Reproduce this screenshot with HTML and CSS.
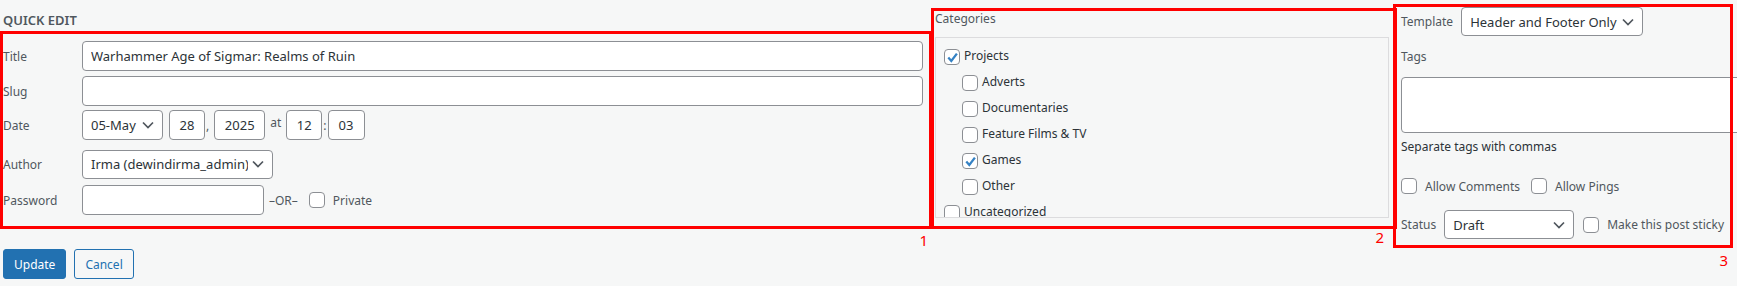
FILE: index.html
```html
<!DOCTYPE html>
<html>
<head>
<link rel="stylesheet" href="styles.css">
</head>
<body>

<div class="quick-edit">
  <div class="cols">

    <!-- left column: title, slug, date, author, password -->
    <div class="col col-left">
      <h4 class="legend">QUICK EDIT</h4>
      <div class="row row-title">
        <span class="lbl">Title</span>
        <input class="txt wide" type="text" value="Warhammer Age of Sigmar: Realms of Ruin">
      </div>
      <div class="row row-slug">
        <span class="lbl">Slug</span>
        <input class="txt wide" type="text" value="">
      </div>
      <div class="row row-date">
        <span class="lbl">Date</span>
        <select class="sel sel-month"><option>05-May</option></select>
        <input class="txt num n-day" type="text" value="28"><span class="sep sep-comma">,</span>
        <input class="txt num n-year" type="text" value="2025"><span class="sep sep-at">at</span>
        <input class="txt num n-hour" type="text" value="12"><span class="sep sep-colon">:</span>
        <input class="txt num n-min" type="text" value="03">
      </div>
      <div class="row row-author">
        <span class="lbl">Author</span>
        <select class="sel sel-author"><option>Irma (dewindirma_admin)</option></select>
      </div>
      <div class="row row-pass">
        <span class="lbl">Password</span>
        <input class="txt pass" type="text" value="">
        <span class="or">&ndash;OR&ndash;</span>
        <label class="check check-private"><input type="checkbox"><span>Private</span></label>
      </div>
      <div class="mark mark-1"><span>1</span></div>
    </div>

    <!-- center column: categories -->
    <div class="col col-center">
      <div class="cat-title">Categories</div>
      <ul class="cat-list">
        <li><label class="check cat"><input type="checkbox" checked><span>Projects</span></label>
          <ul class="children">
            <li><label class="check cat"><input type="checkbox"><span>Adverts</span></label></li>
            <li><label class="check cat"><input type="checkbox"><span>Documentaries</span></label></li>
            <li><label class="check cat"><input type="checkbox"><span>Feature Films &amp; TV</span></label></li>
            <li><label class="check cat"><input type="checkbox" checked><span>Games</span></label></li>
            <li><label class="check cat"><input type="checkbox"><span>Other</span></label></li>
          </ul>
        </li>
        <li><label class="check cat"><input type="checkbox"><span>Uncategorized</span></label></li>
      </ul>
      <div class="mark mark-2"><span>2</span></div>
    </div>

    <!-- right column: template, tags, status -->
    <div class="col col-right">
      <div class="row row-template">
        <span class="lbl-inline">Template</span>
        <select class="sel sel-template"><option>Header and Footer Only</option></select>
      </div>
      <div class="tags-title">Tags</div>
      <textarea class="tags"></textarea>
      <div class="hint">Separate tags with commas</div>
      <div class="row row-allow">
        <label class="check"><input type="checkbox"><span>Allow Comments</span></label>
        <label class="check"><input type="checkbox"><span>Allow Pings</span></label>
      </div>
      <div class="row row-status">
        <span class="lbl-inline">Status</span>
        <select class="sel sel-status"><option>Draft</option></select>
        <label class="check"><input type="checkbox"><span>Make this post sticky</span></label>
      </div>
      <div class="mark mark-3"><span>3</span></div>
    </div>

  </div>

  <div class="actions">
    <button class="btn btn-primary">Update</button>
    <button class="btn btn-secondary">Cancel</button>
  </div>
</div>

</body>
</html>
```

FILE: styles.css
```css
* {box-sizing: border-box;}

html, body {overflow: hidden;}

body {
    margin: 0;
    background-color: #f6f7f7;
    font-family: "Noto Sans", "Open Sans", sans-serif;
    font-size: 12px;
    color: #50575e;
}

.quick-edit {
    padding: 4px 0 0 3px;
}

/* Columns */
.cols {
    display: flex;
    align-items: flex-start;
    gap: 12px;
}
.col {
    position: relative;
    flex: none;
}
.col-left {width: 920px;}
.col-center {width: 454px;}
.col-right {width: 420px;}

.legend {
    margin: 6px 0 0 0;
    font-size: 13px;
    font-weight: 600;
    line-height: 20px;
    color: #50575e;
}

.row {
    display: flex;
    align-items: center;
    height: 30px;
}
.row-title {margin-top: 11px;}
.row-slug {margin-top: 5px;}
.row-date {margin-top: 4px;}
.row-author {margin-top: 9px;}
.row-pass {margin-top: 6px;}

.lbl {
    width: 79px;
    flex: none;
}
.lbl-inline {
    margin-right: 8px;
}

/* Inputs */
.txt, .sel, .tags {
    margin: 0;
    border: 1px solid #8c8f94;
    border-radius: 4px;
    background-color: #fff;
    color: #2c3338;
    font-family: "Noto Sans", "Open Sans", sans-serif;
    font-size: 13px;
}
.txt {
    height: 30px;
    padding: 0 8px;
}
.wide {flex: 1;}
.num {
    text-align: center;
    padding: 0;
}
.n-day, .n-hour {width: 36px;}
.n-min {width: 37px;}
.n-year {width: 51px;}
.pass {width: 182px;}

.sep {color: #50575e;}
.sep-comma {margin: 0 5px 0 1px;}
.sep-at {margin: 0 5px; position: relative; top: -3px;}
.sep-colon {margin: 0 1px 0 1px;}

.sel {
    appearance: none;
    -webkit-appearance: none;
    height: 30px;
    padding: 0 24px 0 8px;
    background-image: url("data:image/svg+xml,%3Csvg xmlns='http://www.w3.org/2000/svg' width='20' height='20'%3E%3Cpath d='M5 7.5l5 5 5-5' fill='none' stroke='%2350575e' stroke-width='1.7'/%3E%3C/svg%3E");
    background-repeat: no-repeat;
    background-position: right 4px top 55%;
    background-size: 20px 20px;
}
.sel-month {width: 81px; margin-right: 6px;}
.sel-author {width: 191px; height: 29px;}
.sel-template {width: 182px; height: 29px;}
.sel-status {width: 130px; height: 29px; margin-right: 9px;}

.or {margin: 0 11px 0 5px;}

/* Checkboxes */
.check {
    display: inline-flex;
    align-items: center;
    gap: 8px;
    color: #50575e;
}
.check input {
    appearance: none;
    -webkit-appearance: none;
    width: 16px;
    height: 16px;
    margin: 0;
    flex: none;
    border: 1px solid #8c8f94;
    border-radius: 4px;
    background-color: #fff;
}
.check input:checked {
    background-image: url("data:image/svg+xml,%3Csvg xmlns='http://www.w3.org/2000/svg' width='16' height='16'%3E%3Cpath d='M3.3 7.6l3 3.4 5.6-7.4' fill='none' stroke='%233582c4' stroke-width='2.3'/%3E%3C/svg%3E");
    background-repeat: no-repeat;
}

/* Categories */
.cat-title {
    margin-top: 5px;
    line-height: 20px;
}
.cat-list {
    list-style: none;
    margin: 8px 0 0 0;
    padding: 5px 0 0 8px;
    height: 181px;
    overflow: hidden;
    border: 1px solid #dcdcde;
}
.cat-list ul {
    list-style: none;
    margin: 0;
    padding: 0 0 0 18px;
}
.cat-list li {
    display: block;
}
.cat {
    display: flex;
    gap: 4px;
    color: #2c3338;
    height: 26px;
}
.cat input {margin-top: 2px;}
.cat span {margin-top: -2px;}

/* Right column */
.row-template {
    margin-top: 3px;
    height: 29px;
}
.tags-title {
    margin-top: 11px;
    line-height: 20px;
}
.tags {
    display: block;
    width: 420px;
    height: 56px;
    margin-top: 10px;
    resize: none;
}
.hint {
    margin-top: 4px;
    line-height: 20px;
    color: #2c3338;
}
.row-allow {
    height: 20px;
    margin-top: 19px;
    gap: 11px;
}
.row-status {
    height: 29px;
    margin-top: 14px;
}

/* Buttons */
.actions {
    margin-top: 10px;
    display: flex;
    gap: 8px;
}
.btn {
    height: 30px;
    padding: 0 10px;
    border-radius: 3px;
    font-family: "Noto Sans", "Open Sans", sans-serif;
    font-size: 12px;
    cursor: pointer;
}
.btn-primary {
    background-color: #2271b1;
    border: 1px solid #2271b1;
    color: #fff;
}
.btn-secondary {
    background-color: #f6f7f7;
    border: 1px solid #2271b1;
    color: #2271b1;
}

/* Red annotation boxes drawn over the form */
.mark {
    position: absolute;
    border: 3px solid #ff0000;
    pointer-events: none;
}
.mark span {
    position: absolute;
    color: #ff0000;
    font-size: 15px;
    line-height: 16px;
}
.mark-1 {left: -3px; top: 27px; width: 932px; height: 198px;}
.mark-1 span {right: 1px; top: 198px;}
.mark-2 {left: -4px; top: 4px; width: 466px; height: 221px;}
.mark-2 span {right: 10px; top: 218px;}
.mark-3 {left: -8px; top: 0; width: 340px; height: 244px;}
.mark-3 span {right: 2px; top: 245px;}
```
